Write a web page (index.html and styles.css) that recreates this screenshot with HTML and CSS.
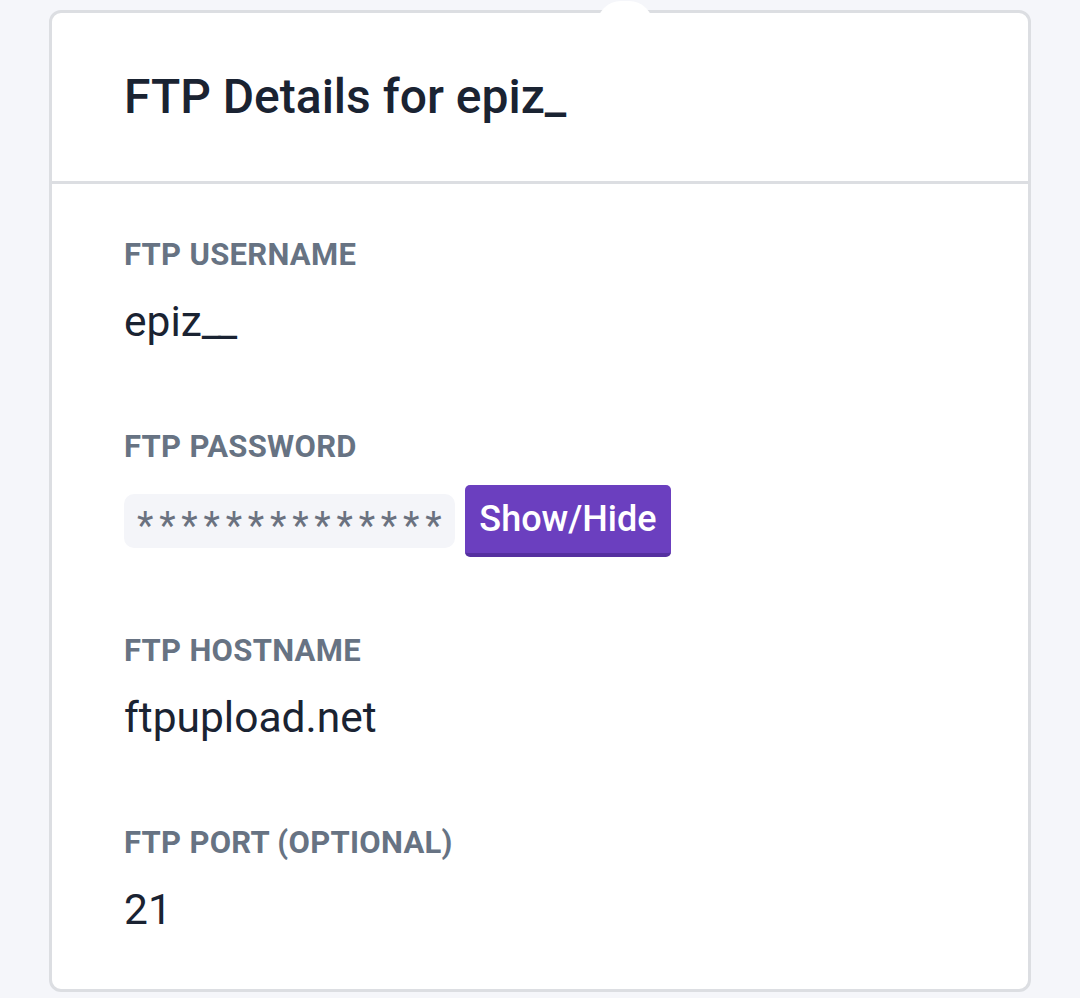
FILE: index.html
```html
<!DOCTYPE html>
<html lang="en">

<head>
    <meta charset="UTF-8">
    <meta name="viewport" content="width=device-width, initial-scale=1.0">
    <title>FTP Details</title>
    <link rel="stylesheet" href="styles.css">
</head>

<body>
    <div class="card">
        <span class="blot"></span>
        <div class="card-header">
            <h1>FTP Details for epiz_</h1>
        </div>

        <div class="card-body">
            <div class="field">
                <div class="field-label">FTP Username</div>
                <div class="field-value">epiz<span class="mask">__</span></div>
            </div>

            <div class="field">
                <div class="field-label">FTP Password</div>
                <div class="password-row">
                    <span class="password-box" id="password">**************</span>
                    <button class="btn-toggle" id="toggle">Show/Hide</button>
                </div>
            </div>

            <div class="field">
                <div class="field-label">FTP Hostname</div>
                <div class="field-value">ftpupload.net</div>
            </div>

            <div class="field">
                <div class="field-label">FTP Port (optional)</div>
                <div class="field-value">21</div>
            </div>
        </div>
    </div>
</body>

</html>
```

FILE: styles.css
```css
body {
    font-family: Roboto, "Liberation Sans", sans-serif;
    margin: 0;
    padding: 10px 49px 9px;
    background-color: #f5f6fa;
    color: #1a2332;
}

.card {
    position: relative;
    background: white;
    border: 3px solid #dcdee2;
    border-radius: 12px;
}

/* white smudge over the top edge */
.blot {
    position: absolute;
    top: -12px;
    left: 545px;
    width: 56px;
    height: 26px;
    background: white;
    border-radius: 24px 24px 0 0;
}

.card-header {
    padding: 49px 72px;
    border-bottom: 3px solid #dcdee2;
}

.card-header h1 {
    margin: 0;
    font-size: 48px;
    font-weight: 500;
    line-height: 70px;
}

.card-body {
    padding: 50px 72px 48px;
}

.field {
    margin-bottom: 73px;
}

.field:last-child {
    margin-bottom: 0;
}

.field-label {
    font-size: 31px;
    font-weight: 700;
    line-height: 42px;
    letter-spacing: 0.3px;
    text-transform: uppercase;
    color: #677383;
}

.field-value {
    margin-top: 14px;
    font-size: 42.5px;
    line-height: 63px;
}

.mask {
    letter-spacing: -3px;
}

.password-row {
    margin-top: 17px;
    display: flex;
    align-items: center;
    gap: 10px;
}

.password-box {
    display: inline-block;
    background: #f4f5f9;
    border-radius: 10px;
    padding: 0 8px 0 13px;
    height: 54px;
    line-height: 64px;
    font-size: 38px;
    letter-spacing: 5.8px;
    color: #6b7280;
}

.btn-toggle {
    font-family: Roboto, "Liberation Sans", sans-serif;
    font-size: 36px;
    font-weight: 500;
    color: white;
    background: #6b3fbf;
    border: none;
    border-bottom: 4px solid #5530a0;
    border-radius: 5px;
    height: 72px;
    padding: 0 14px;
    cursor: pointer;
}
```
